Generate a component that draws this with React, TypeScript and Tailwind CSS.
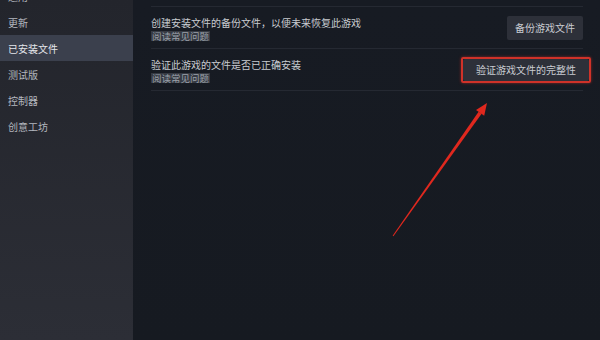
import React from 'react';

const navItems = ['通用', '更新', '已安装文件', '测试版', '控制器', '创意工坊'];

function FileRow({ title, action, highlight = false }: { title: string; action: string; highlight?: boolean }) {
  return (
    <div className="flex items-center justify-between h-[42px] border-b border-[#252932]">
      <div className="flex flex-col gap-[2px] pt-[2px]">
        <span className="text-[10px] leading-[12px] text-[#c8cbd0]">{title}</span>
        <span className="self-start text-[9.5px] leading-[10px] text-[#9ba1aa] bg-[#363a43] px-[1px]">阅读常见问题</span>
      </div>
      {highlight ? (
        <span className="-mr-[8px] border-2 border-[#cf3229] rounded-[2px] shadow-[0_0_3px_rgba(220,50,40,0.6)] flex">
          <button className="h-[22px] px-[13px] bg-[#2d3039] text-[#c9ccd2] text-[10px] leading-none rounded-[2px] whitespace-nowrap">
            {action}
          </button>
        </span>
      ) : (
        <button className="h-[24px] px-[8px] bg-[#2d3039] text-[#c9ccd2] text-[10px] leading-none rounded-[2px] whitespace-nowrap">
          {action}
        </button>
      )}
    </div>
  );
}

export default function App() {
  return (
    <div className="relative w-[600px] h-[340px] overflow-hidden flex font-['Noto_Sans_CJK_SC','Noto_Sans',sans-serif] bg-[#161a22]">
      {/* Sidebar */}
      <div className="w-[133px] shrink-0 bg-gradient-to-b from-[#23252c] to-[#2c2e36]">
        <div className="-mt-[17px] flex flex-col">
          {navItems.map((item) => (
            <div
              key={item}
              className={
                item === '已安装文件'
                  ? 'h-[26px] flex items-center px-[8px] bg-[#3b404d] text-[#e4e6ea] text-[10px]'
                  : 'h-[26px] flex items-center px-[8px] text-[#b3b7bf] text-[10px]'
              }
            >
              {item}
            </div>
          ))}
        </div>
      </div>

      {/* Main */}
      <div className="flex-1 pl-[18px] pr-[17px] pt-[6px] bg-gradient-to-b from-[#171b23] to-[#161a21]">
        <div className="border-t border-[#252932]">
          <FileRow title="创建安装文件的备份文件，以便未来恢复此游戏" action="备份游戏文件" />
          <FileRow title="验证此游戏的文件是否已正确安装" action="验证游戏文件的完整性" highlight />
        </div>
      </div>

      {/* annotation arrow */}
      <svg className="absolute inset-0 pointer-events-none" width="600" height="340" viewBox="0 0 600 340">
        <polygon points="393.4,236.3 392.6,235.7 478.6,111.8 481.6,113.8" fill="#e0281e" />
        <polygon points="487,103 484.2,115.7 476,109.9" fill="#e0281e" />
      </svg>
    </div>
  );
}
